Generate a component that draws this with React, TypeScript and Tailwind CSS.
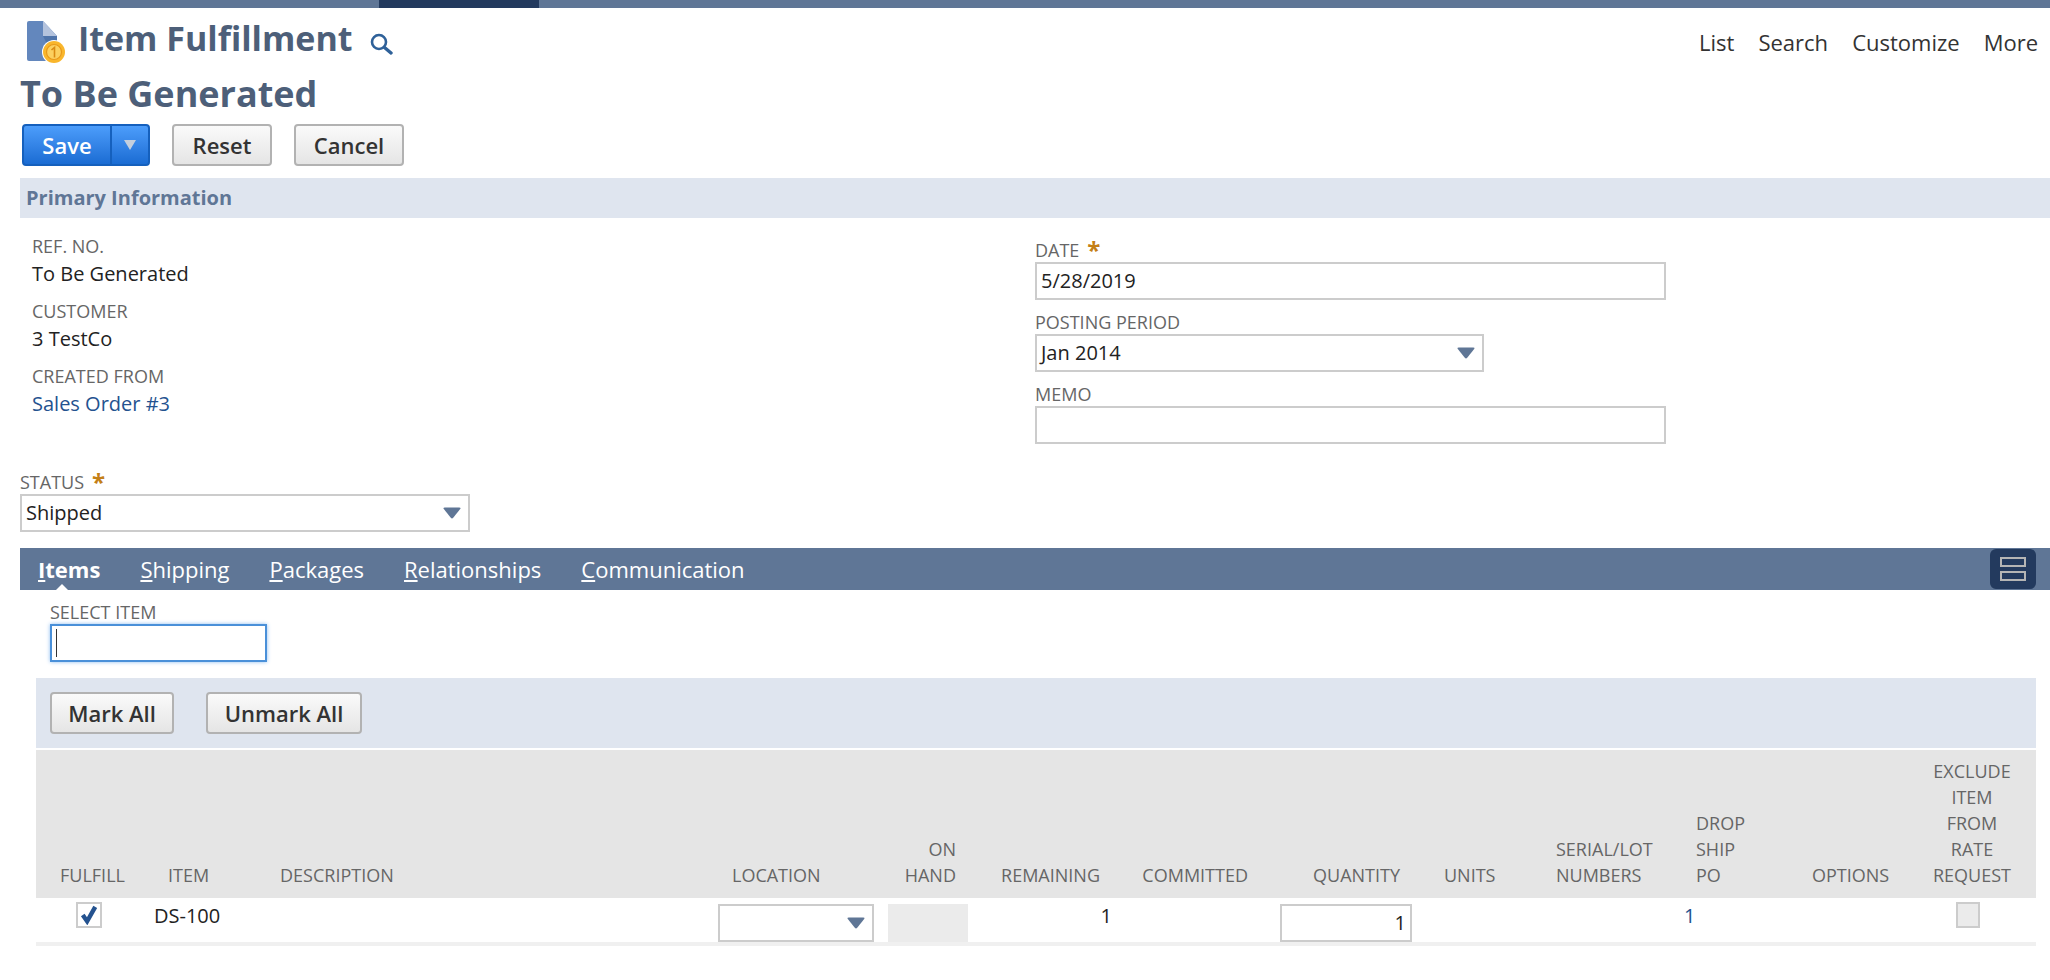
import { ReactNode } from "react";

const FONT = { fontFamily: '"Open Sans", "Liberation Sans", sans-serif' };

function Caret({ className = "" }: { className?: string }) {
  return (
    <svg viewBox="0 0 16 10" className={`w-5 h-3 ${className}`}>
      <path d="M1 1.5Q0.5 0.5 2 0.5H14Q15.5 0.5 15 1.5L9 9Q8 10 7 9Z" fill="#5f7696" />
    </svg>
  );
}

function DocIcon() {
  return (
    <svg viewBox="0 0 40 44" className="w-10 h-11 shrink-0">
      <path d="M1 3Q1 1 3 1H17L31 16V41H3Q1 41 1 39Z" fill="#6387bd" />
      <path d="M17 1L31 16H17Z" fill="#b4c3dd" />
      <path d="M17 16L31 16V28L20 22Z" fill="#4f74aa" />
      <circle cx="28" cy="32" r="12" fill="#fff" />
      <circle cx="28" cy="32" r="11" fill="#f9b62c" />
      <circle cx="28" cy="32" r="7.5" fill="#fcd05f" stroke="#e8981a" strokeWidth="1.2" />
      <path d="M25.5 30L28.5 27.5V37.5" stroke="#d98a12" strokeWidth="1.6" fill="none" />
    </svg>
  );
}

function SearchIcon() {
  return (
    <svg viewBox="0 0 24 24" className="w-6 h-6 mt-3 ml-1" fill="none">
      <circle cx="10" cy="10" r="7" stroke="#2f6199" strokeWidth="2.6" />
      <path d="M15.5 15.5L22 21" stroke="#2f6199" strokeWidth="3.4" strokeLinecap="round" />
    </svg>
  );
}

function Label({ children, required }: { children: ReactNode; required?: boolean }) {
  return (
    <div className="flex items-start gap-2 text-lg leading-6 text-[#666666]">
      <span>{children}</span>
      {required && <span className="text-2xl leading-6 font-bold text-[#c47f17]">*</span>}
    </div>
  );
}

function ReadField({ label, children }: { label: string; children: ReactNode }) {
  return (
    <div className="h-[65px]">
      <Label>{label}</Label>
      <div className="text-xl leading-8 text-[#222222]">{children}</div>
    </div>
  );
}

function Box({ className = "", children }: { className?: string; children?: ReactNode }) {
  return (
    <div className={`flex items-center justify-between h-9.5 px-1 border-2 border-[#cccccc] bg-white text-xl text-[#222222] ${className}`}>
      {children}
    </div>
  );
}

function GrayButton({ children, className = "" }: { children: ReactNode; className?: string }) {
  return (
    <button className={`h-10.5 rounded border-2 border-[#b2b2b2] bg-gradient-to-b from-[#fafafa] to-[#e5e5e5] text-[22px] font-semibold text-[#333333] ${className}`}>
      {children}
    </button>
  );
}

const tabs = [
  ["I", "tems"],
  ["S", "hipping"],
  ["P", "ackages"],
  ["R", "elationships"],
  ["C", "ommunication"],
];

const headers: { lines: string[]; className: string }[] = [
  { lines: ["FULFILL"], className: "w-28 pl-6 text-left" },
  { lines: ["ITEM"], className: "w-28 pl-5 text-left" },
  { lines: ["DESCRIPTION"], className: "pl-5 text-left" },
  { lines: ["LOCATION"], className: "w-40 pl-4 text-left" },
  { lines: ["ON", "HAND"], className: "w-24 pr-4 text-right" },
  { lines: ["REMAINING"], className: "w-40 pr-8 text-right" },
  { lines: ["COMMITTED"], className: "w-36 pr-7 text-right" },
  { lines: ["QUANTITY"], className: "w-36 pr-5 text-right" },
  { lines: ["UNITS"], className: "w-30 pl-6 text-left" },
  { lines: ["SERIAL/LOT", "NUMBERS"], className: "w-36 pl-4 text-left" },
  { lines: ["DROP", "SHIP", "PO"], className: "w-28 pl-3 text-left" },
  { lines: ["OPTIONS"], className: "w-32 pl-4 text-left" },
  { lines: ["EXCLUDE", "ITEM", "FROM", "RATE", "REQUEST"], className: "w-28 pr-4 text-center" },
];

export default function App() {
  return (
    <div style={FONT} className="min-h-screen bg-white text-[#222222]">
      {/* top strip */}
      <div className="h-2 bg-[#5f7696]">
        <div className="ml-[379px] h-full w-40 bg-[#233a5e]" />
      </div>

      {/* title row */}
      <div className="flex items-start justify-between pl-6.5 pr-3 pt-3">
        <div className="flex items-start gap-3">
          <DocIcon />
          <h1 className="text-[34px] leading-9 font-bold text-[#4d5f79]">Item Fulfillment</h1>
          <SearchIcon />
        </div>
        <nav className="flex gap-6 pt-1.5 text-[22px] leading-8 text-[#333333]">
          <span>List</span>
          <span>Search</span>
          <span>Customize</span>
          <span>More</span>
        </nav>
      </div>
      <h2 className="pl-5 pt-2.5 text-4xl leading-10 font-bold text-[#4d5f79]">To Be Generated</h2>

      {/* buttons */}
      <div className="flex gap-5.5 pl-5.5 pt-2.5">
        <div className="flex h-10.5 w-32 rounded border-2 border-[#1560bd] bg-gradient-to-b from-[#4c9dfb] to-[#1a6cd3] text-[22px] font-semibold text-white">
          <span className="flex flex-1 items-center justify-center border-r-2 border-[#1560bd]">Save</span>
          <span className="flex w-9 items-center justify-center">
            <svg viewBox="0 0 12 10" className="w-3 h-2.5">
              <path d="M0 0H12L6 10Z" fill="#c4cfdd" />
            </svg>
          </span>
        </div>
        <GrayButton className="w-25">Reset</GrayButton>
        <GrayButton className="w-27.5">Cancel</GrayButton>
      </div>

      {/* primary information */}
      <div className="ml-5 mt-3 flex h-10 items-center bg-[#dfe5ef] pl-1.5 text-xl font-bold text-[#5f7696]">
        Primary Information
      </div>

      <div className="flex pt-4">
        <div className="w-[1035px] pl-8">
          <ReadField label="REF. NO.">To Be Generated</ReadField>
          <ReadField label="CUSTOMER">3 TestCo</ReadField>
          <ReadField label="CREATED FROM">
            <span className="text-[#24528f]">Sales Order #3</span>
          </ReadField>
        </div>
        <div className="flex flex-col gap-2.5 pt-1">
          <div>
            <Label required>DATE</Label>
            <Box className="w-[631px]">5/28/2019</Box>
          </div>
          <div>
            <Label>POSTING PERIOD</Label>
            <Box className="w-[449px]">
              <span>Jan 2014</span>
              <Caret className="mr-0.5" />
            </Box>
          </div>
          <div>
            <Label>MEMO</Label>
            <Box className="w-[631px]" />
          </div>
        </div>
      </div>

      {/* status */}
      <div className="pl-5 mt-6.5">
        <Label required>STATUS</Label>
        <Box className="w-112.5">
          <span>Shipped</span>
          <Caret className="mr-0.5" />
        </Box>
      </div>

      {/* tabs */}
      <div className="ml-5 mt-4 flex h-10.5 items-center justify-between bg-[#5f7696] pl-4.5 text-[22px] text-white">
        <div className="flex gap-10">
          {tabs.map(([key, rest], i) => (
            <span key={rest} className={i === 0 ? "relative font-bold" : ""}>
              <span className="underline">{key}</span>
              {rest}
              {i === 0 && (
                <span className="absolute -bottom-1.5 left-4 h-0 w-0 border-x-8 border-b-8 border-x-transparent border-b-white" />
              )}
            </span>
          ))}
        </div>
        <div className="mr-3.5 flex h-10 w-11.5 flex-col items-center justify-center gap-1 rounded-md bg-[#233a5e]">
          <span className="h-2.5 w-6.5 border-2 border-[#b5b5b5]" />
          <span className="h-2.5 w-6.5 border-2 border-[#b5b5b5]" />
        </div>
      </div>

      {/* select item */}
      <div className="pl-12.5 pt-2.5">
        <Label>SELECT ITEM</Label>
        <div className="flex h-9.5 w-[217px] items-center border-2 border-[#4a90d9] pl-1 shadow-[0_0_4px_#8dbdf0]">
          <span className="h-7 w-px bg-[#333333]" />
        </div>
      </div>

      {/* sublist */}
      <div className="ml-9 mr-3.5 mt-4">
        <div className="flex h-[70px] items-center gap-8 bg-[#dfe5ef] pl-3.5">
          <GrayButton className="w-31">Mark All</GrayButton>
          <GrayButton className="w-39">Unmark All</GrayButton>
        </div>
        <table className="mt-0.5 w-full table-fixed border-b-4 border-[#f0f0f0]">
          <thead>
            <tr className="bg-[#e5e5e5]">
              {headers.map((h) => (
                <th key={h.lines[0]} className={`align-bottom pt-2 pb-2.5 text-lg leading-6.5 font-normal text-[#666666] ${h.className}`}>
                  {h.lines.map((l) => (
                    <div key={l}>{l}</div>
                  ))}
                </th>
              ))}
            </tr>
          </thead>
          <tbody>
            <tr className="h-11 text-xl">
              <td className="align-top pt-1 pl-10">
                <div className="flex h-6.5 w-6.5 items-center justify-center border-2 border-[#cccccc]">
                  <svg viewBox="0 0 16 16" className="w-5 h-5">
                    <path d="M3 8L6.5 13L13 1.5" stroke="#24528f" strokeWidth="3.5" fill="none" />
                  </svg>
                </div>
              </td>
              <td className="align-top pt-1 pl-1.5">DS-100</td>
              <td />
              <td className="px-0.5 pt-1.5 align-top">
                <Box className="justify-end">
                  <Caret className="mr-0.5" />
                </Box>
              </td>
              <td className="pl-3 pr-1 pt-1.5 align-top">
                <div className="h-9.5 bg-[#ebebeb]" />
              </td>
              <td className="align-top pt-1 pr-5 text-right">1</td>
              <td />
              <td className="pl-1 pr-2 pt-1.5 align-top">
                <Box className="justify-end">1</Box>
              </td>
              <td />
              <td />
              <td className="align-top pt-1 text-[#24528f]">1</td>
              <td />
              <td className="align-top pt-1">
                <div className="ml-8 h-6.5 w-6 border-2 border-[#cccccc] bg-[#ebebeb]" />
              </td>
            </tr>
          </tbody>
        </table>
      </div>
    </div>
  );
}
